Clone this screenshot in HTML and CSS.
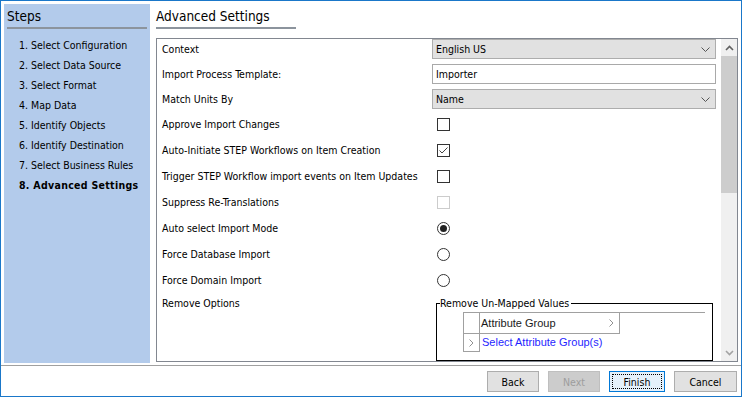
FILE: index.html
```html
<!DOCTYPE html>
<html>
<head>
<meta charset="utf-8">
<link rel="stylesheet" href="styles.css">
</head>
<body>
<div class="window">
  <div class="top">
    <aside class="steps">
      <div class="heading">Steps</div>
      <ul class="step-list">
        <li>1. Select Configuration</li>
        <li>2. Select Data Source</li>
        <li>3. Select Format</li>
        <li>4. Map Data</li>
        <li>5. Identify Objects</li>
        <li>6. Identify Destination</li>
        <li>7. Select Business Rules</li>
        <li class="current">8. Advanced Settings</li>
      </ul>
    </aside>
    <main class="main">
      <div class="heading main-heading">Advanced Settings</div>
      <div class="panel">
        <div class="form">
          <div class="row ctrl-row">
            <span class="label">Context</span>
            <div class="control select"><span>English US</span>
              <svg class="chev" width="9" height="5" viewBox="0 0 9 5"><polyline points="0.5,0.5 4.5,4.5 8.5,0.5" fill="none" stroke="#555" stroke-width="1"/></svg>
            </div>
          </div>
          <div class="row ctrl-row">
            <span class="label">Import Process Template:</span>
            <div class="control textbox">Importer</div>
          </div>
          <div class="row ctrl-row last">
            <span class="label">Match Units By</span>
            <div class="control select"><span>Name</span>
              <svg class="chev" width="9" height="5" viewBox="0 0 9 5"><polyline points="0.5,0.5 4.5,4.5 8.5,0.5" fill="none" stroke="#555" stroke-width="1"/></svg>
            </div>
          </div>
          <div class="row check-row">
            <span class="label">Approve Import Changes</span>
            <span class="checkbox"></span>
          </div>
          <div class="row check-row">
            <span class="label">Auto-Initiate STEP Workflows on Item Creation</span>
            <span class="checkbox"><svg width="11" height="11" viewBox="0 0 11 11"><polyline points="1.5,5.5 4,8 9.5,2.5" fill="none" stroke="#444" stroke-width="1"/></svg></span>
          </div>
          <div class="row check-row">
            <span class="label">Trigger STEP Workflow import events on Item Updates</span>
            <span class="checkbox"></span>
          </div>
          <div class="row check-row">
            <span class="label">Suppress Re-Translations</span>
            <span class="checkbox disabled"></span>
          </div>
          <div class="row check-row">
            <span class="label">Auto select Import Mode</span>
            <span class="radio checked"></span>
          </div>
          <div class="row check-row">
            <span class="label">Force Database Import</span>
            <span class="radio"></span>
          </div>
          <div class="row check-row">
            <span class="label">Force Domain Import</span>
            <span class="radio"></span>
          </div>
          <div class="row remove-row">
            <span class="label">Remove Options</span>
            <fieldset class="group">
              <legend>Remove Un-Mapped Values</legend>
              <div class="attr-grid">
                <div class="attr-row r1">
                  <span class="gutter"></span>
                  <span class="name-cell">Attribute Group
                    <svg width="5" height="8" viewBox="0 0 5 8"><polyline points="0.5,0.5 4,4 0.5,7.5" fill="none" stroke="#909090" stroke-width="1"/></svg>
                  </span>
                </div>
                <div class="attr-row r2">
                  <span class="gutter"><svg width="5" height="8" viewBox="0 0 5 8"><polyline points="0.5,0.5 4,4 0.5,7.5" fill="none" stroke="#909090" stroke-width="1"/></svg></span>
                  <span class="link">Select Attribute Group(s)</span>
                </div>
              </div>
            </fieldset>
          </div>
        </div>
        <div class="scrollbar">
          <div class="sb-arrow"><svg width="9" height="6" viewBox="0 0 9 6"><polyline points="1,5 4.5,1.5 8,5" fill="none" stroke="#606060" stroke-width="1.6"/></svg></div>
          <div class="sb-thumb"></div>
          <div class="sb-track"></div>
          <div class="sb-arrow"><svg width="9" height="6" viewBox="0 0 9 6"><polyline points="1,1 4.5,4.5 8,1" fill="none" stroke="#a3a3a3" stroke-width="1.6"/></svg></div>
        </div>
      </div>
    </main>
  </div>
  <div class="footer">
    <button class="btn back">Back</button>
    <button class="btn next" disabled>Next</button>
    <button class="btn finish"><span class="focus">Finish</span></button>
    <button class="btn cancel">Cancel</button>
  </div>
</div>
</body>
</html>
```
FILE: styles.css
```css
* { box-sizing: border-box; }
html, body { margin: 0; padding: 0; background: #fff; }
body {
  font-family: "DejaVu Sans Condensed", "DejaVu Sans", sans-serif;
  font-stretch: condensed;
  font-size: 10.5px;
  color: #000;
}
.window {
  width: 742px;
  height: 397px;
  border: 1px solid #1a77c9;
  display: flex;
  flex-direction: column;
  background: #fff;
}
.top {
  display: flex;
  height: 362px;
  padding: 3px 3px 0 3px;
}
.steps {
  width: 146px;
  flex: none;
  background: #b3cbeb;
  padding: 0 3px;
}
.heading {
  font-size: 13.5px;
  line-height: 17px;
  padding: 4px 0 2px;
  border-bottom: 2px solid #8c949d;
  white-space: nowrap;
}
.step-list {
  list-style: none;
  margin: 6px 0 0;
  padding: 0 0 0 12px;
}
.step-list li { line-height: 20px; white-space: nowrap; }
.step-list li.current { font-weight: bold; letter-spacing: 0.3px; }
.main {
  margin-left: 6px;
  width: 582px;
  flex: none;
  display: flex;
  flex-direction: column;
}
.main-heading { width: 140px; }
.panel {
  margin-top: 9px;
  height: 324px;
  border: 1px solid #828790;
  display: flex;
}
.form {
  flex: 1;
  overflow: hidden;
  padding: 0 5px;
}
.row { display: flex; align-items: center; }
.ctrl-row { height: 20px; margin-bottom: 5px; }
.ctrl-row.last { margin-bottom: 2px; }
.check-row { height: 26px; }
.label { width: 270px; flex: none; white-space: nowrap; }
.control { width: 284px; flex: none; height: 20px; }
.select {
  background: #e1e1e1;
  border: 1px solid #adadad;
  display: flex;
  align-items: center;
  justify-content: space-between;
  padding: 0 5px 0 3px;
}
.textbox {
  border: 1px solid #a9a9a9;
  background: #fff;
  padding: 0 3px;
  line-height: 18px;
}
.checkbox {
  width: 13px;
  height: 13px;
  margin-left: 5px;
  border: 1px solid #333;
  background: #fff;
  display: flex;
}
.checkbox.disabled { border-color: #cccccc; }
.radio {
  width: 13px;
  height: 13px;
  margin-left: 5px;
  border: 1px solid #333;
  border-radius: 50%;
  background: #fff;
  display: flex;
  align-items: center;
  justify-content: center;
}
.radio.checked::after {
  content: "";
  width: 7px;
  height: 7px;
  border-radius: 50%;
  background: #222;
}
.remove-row { align-items: flex-start; }
.remove-row .label { line-height: 20px; }
.group {
  margin: 3px 0 0 4px;
  width: 277px;
  height: 65px;
  padding: 0 0 0 3px;
  border: 1px solid #000;
  min-width: 0;
}
.group legend {
  padding: 0 2px 0 0;
  line-height: 14px;
}
.attr-grid {
  margin: 2px 0 0 23px;
  width: 242px;
  border-top: 1px solid #a0a0a0;
  font-family: "Liberation Sans", Arial, sans-serif;
  font-stretch: normal;
  font-size: 11px;
}
.attr-row { display: flex; }
.attr-row.r1 { height: 21px; }
.attr-row.r2 { height: 18px; }
.gutter {
  width: 17px;
  border-left: 1px solid #a0a0a0;
  border-right: 1px solid #a0a0a0;
  border-bottom: 1px solid #a0a0a0;
  display: flex;
  align-items: center;
  justify-content: center;
}
.name-cell {
  width: 140px;
  border-right: 1px solid #a0a0a0;
  border-bottom: 1px solid #a0a0a0;
  display: flex;
  align-items: center;
  justify-content: space-between;
  padding: 0 5px 0 1px;
  color: #1a1a1a;
}
.link {
  color: #1f1fff;
  padding-left: 2px;
  line-height: 17px;
}
.scrollbar {
  width: 16px;
  flex: none;
  background: #f0f0f0;
  display: flex;
  flex-direction: column;
}
.sb-arrow {
  height: 17px;
  display: flex;
  align-items: center;
  justify-content: center;
}
.sb-thumb { height: 137px; background: #cdcdcd; }
.sb-track { flex: 1; }
.footer {
  margin-top: 2px;
  border-top: 1px solid #a0a0a0;
  display: flex;
  justify-content: flex-end;
  gap: 9px;
  padding: 5px 4px 0 0;
}
.btn {
  height: 21px;
  margin: 0;
  padding: 0;
  border: 1px solid #adadad;
  background: #e1e1e1;
  font: inherit;
  color: #000;
  display: flex;
  align-items: center;
  justify-content: center;
}
.back { width: 52px; }
.next { width: 52px; background: #cccccc; border-color: #bfbfbf; color: #9d9d9d; }
.finish { width: 56px; background: #e5f1fb; border-color: #0078d7; padding: 2px; }
.finish .focus {
  flex: 1;
  align-self: stretch;
  border: 1px dotted #000;
  display: flex;
  align-items: center;
  justify-content: center;
}
.cancel { width: 63px; }
```
